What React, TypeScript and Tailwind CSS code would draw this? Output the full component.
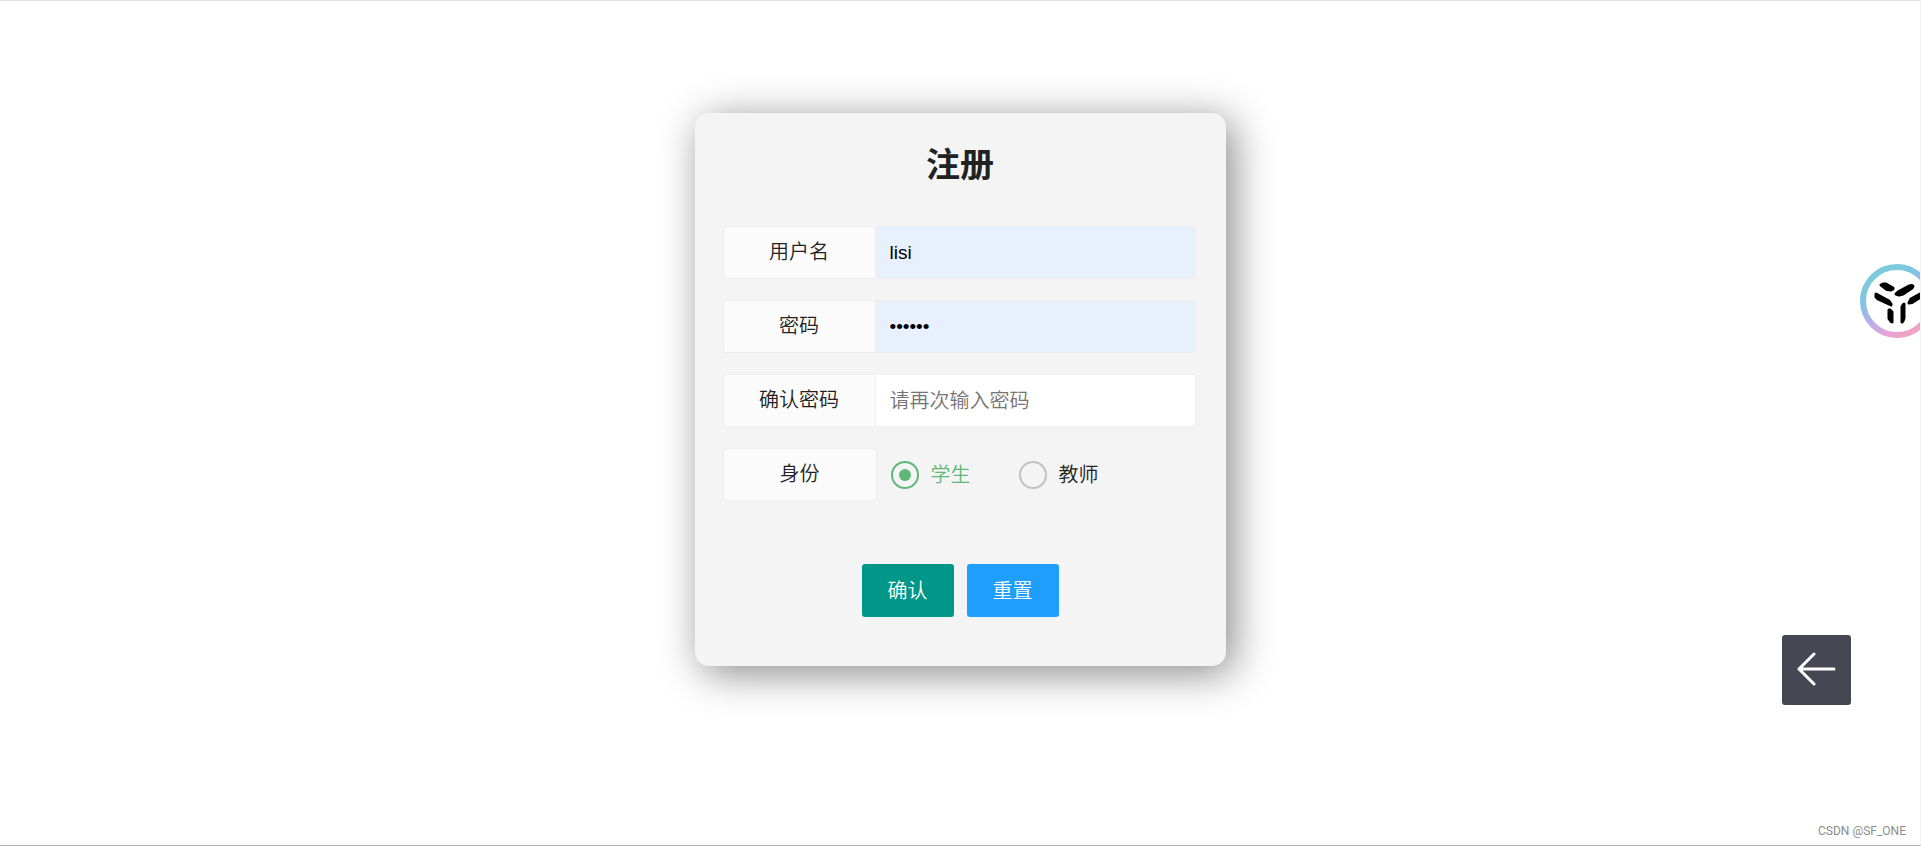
import { useState } from "react";

export default function Register() {
  const [role, setRole] = useState("student");

  return (
    <main className="relative min-h-screen overflow-hidden border-t border-r border-b border-t-[#dddddd] border-r-[#f0f0f6] border-b-[#b5b0a9] bg-white pt-28 text-[20px] leading-7 font-[350] text-[#222222] font-['Liberation_Sans','Noto_Sans_CJK_SC',sans-serif]">
      <form
        className="mx-auto flex w-[531px] flex-col rounded-[14px] bg-[#f4f4f4] pt-7 pb-[49px] shadow-[7px_7px_42px_#888888]"
        onSubmit={(e) => e.preventDefault()}
        onReset={() => setRole("student")}
      >
        <h1 className="mb-9 text-center text-[34px] leading-[49px] font-bold">注册</h1>
        <div className="flex flex-col gap-[21px] pr-[30px] pl-7">
          <Field id="username" label="用户名" value="lisi" filled />
          <Field id="password" label="密码" type="password" value="123456" filled />
          <Field id="confirm" label="确认密码" type="password" placeholder="请再次输入密码" />
          <div className="flex h-[53px] items-center" role="radiogroup" aria-labelledby="role">
            <span
              id="role"
              className="h-full w-[154px] rounded-[3px] border border-[#eeeeee] bg-[#fbfbfb] pt-[11px] text-center"
            >
              身份
            </span>
            <div className="flex gap-12 pl-[14px]">
              <Role value="student" label="学生" current={role} onPick={setRole} />
              <Role value="teacher" label="教师" current={role} onPick={setRole} />
            </div>
          </div>
        </div>
        <div className="mt-[63px] flex justify-center gap-[13px]">
          <button type="submit" className="h-[53px] w-[92px] rounded-[3px] bg-[#009688] text-white">
            确认
          </button>
          <button type="reset" className="h-[53px] w-[92px] rounded-[3px] bg-[#1e9fff] text-white">
            重置
          </button>
        </div>
      </form>

      <a
        href="#"
        aria-label="返回"
        className="absolute right-[69px] bottom-[140px] flex h-[70px] w-[69px] items-center justify-center rounded-[3px] bg-[#454852]"
      >
        <svg width="40" height="36" viewBox="0 0 40 36" fill="none" stroke="#fff" strokeWidth="3" strokeLinecap="round" strokeLinejoin="round">
          <path d="M37 17H2M17 2 2 17l15 15" />
        </svg>
      </a>

      <div className="absolute top-[263px] right-[-14px]">
        <Logo />
      </div>

      <span className="absolute right-[14px] bottom-[6px] font-['Roboto',sans-serif] text-[12px] leading-4 font-normal text-[#8c8c8c]">
        CSDN @SF_ONE
      </span>
    </main>
  );
}

function Field({
  id,
  label,
  type = "text",
  value,
  placeholder,
  filled,
}: {
  id: string;
  label: string;
  type?: string;
  value?: string;
  placeholder?: string;
  filled?: boolean;
}) {
  return (
    <div className="flex h-[53px]">
      <label
        htmlFor={id}
        className="w-[152px] rounded-l-[3px] border border-r-0 border-[#eeeeee] bg-[#fbfbfb] pt-[11px] text-center"
      >
        {label}
      </label>
      <input
        id={id}
        type={type}
        defaultValue={value}
        placeholder={placeholder}
        className={`min-w-0 flex-1 rounded-r-[3px] border border-[#eeeeee] pl-[14px] text-black outline-none placeholder:text-[#757575] ${
          filled ? "bg-[#e8f0fe] text-[19px]" : "bg-white"
        }`}
      />
    </div>
  );
}

function Role({
  value,
  label,
  current,
  onPick,
}: {
  value: string;
  label: string;
  current: string;
  onPick: (value: string) => void;
}) {
  const checked = current === value;
  return (
    <label className={`flex items-center gap-3 ${checked ? "text-[#5fb878]" : "text-[#222222]"}`}>
      <input
        type="radio"
        name="role"
        value={value}
        checked={checked}
        onChange={() => onPick(value)}
        className="grid size-7 appearance-none place-items-center rounded-full border-2 border-[#c2c2c2] before:size-3 before:rounded-full checked:border-[#5fb878] checked:before:bg-[#5fb878]"
      />
      {label}
    </label>
  );
}

function Logo() {
  return (
    <svg width="74" height="74" viewBox="0 0 74 74">
      <defs>
        <linearGradient id="ring" x1="0.2" y1="0.05" x2="0.75" y2="0.95">
          <stop offset="0" stopColor="#7ccbdc" />
          <stop offset="0.3" stopColor="#82c4e0" />
          <stop offset="0.55" stopColor="#b3b0ea" />
          <stop offset="0.85" stopColor="#e8a3d6" />
          <stop offset="1" stopColor="#f0a4c2" />
        </linearGradient>
      </defs>
      <circle cx="37" cy="37" r="34" fill="#fff" stroke="url(#ring)" strokeWidth="6" />
      <g stroke="#000" strokeWidth="3" strokeLinejoin="round">
        <path d="M21 21 23 20h3l7 4v1l-2 1-4-.5z" />
        <path d="M36 30 38 28l11-6 3-.5 1 .5-1 2-9 6-4 1z" />
        <path d="M16 30 29 37l2 3v1L18 35l-2-2z" />
        <path d="M49 39 51 35l9-5 2 .5-2 3-8 5z" />
        <path d="M29 46h1l2 2v10l-1-.5-2-3z" />
        <path d="M42 43 43 41l1-1v14l-1 3-1 1z" />
      </g>
    </svg>
  );
}
